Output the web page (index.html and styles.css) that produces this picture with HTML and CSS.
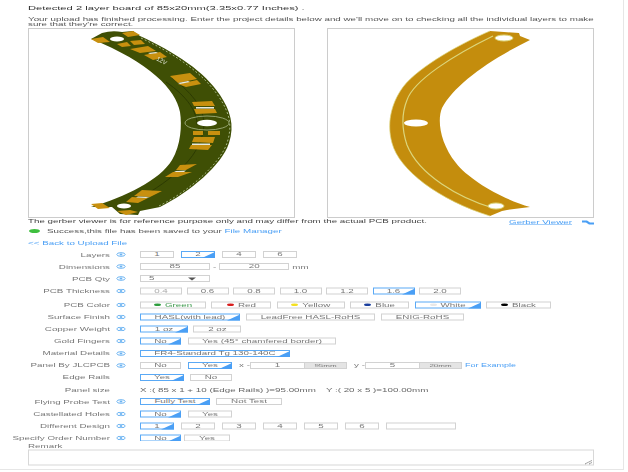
FILE: index.html
```html
<!DOCTYPE html>
<html lang="en">
<head>
  <meta charset="UTF-8" />
  <title>PCB upload</title>
  <link rel="stylesheet" href="styles.css">
</head>
<body>
  <svg class="defs" width="0" height="0">
    <symbol id="eye" viewBox="0 0 10 5" preserveAspectRatio="none">
      <ellipse cx="5" cy="2.5" rx="4.2" ry="1.8" fill="none" stroke="#6db4f2" stroke-width="1"/>
      <ellipse cx="5" cy="2.5" rx="1.4" ry="1" fill="#6db4f2"/>
    </symbol>
  </svg>

  <div class="frame">
  <div class="page">
    <div class="top">
      <p class="detected">Detected 2 layer board of 85x20mm(3.35x0.77 Inches) .</p>
      <p class="intro">Your upload has finished processing. Enter the project details below and we'll move on to checking all the individual layers to make sure that they're correct.</p>

      <div class="viewers">
        <div class="viewer">
          <svg viewBox="29 29 265 188" preserveAspectRatio="none">
            <path d="M91 39 L102 33 Q112 30 122 32 L133 31 L140 36 C175 52 205 72 220 95 C230 110 235 125 229 143 C222 165 190 192 160 207 L140 211 L138 215 L120 214 L112 207 L91 207 C125 197 160 180 172 160 C181 145 182 125 180 112 C176 90 150 62 91 39 Z" fill="#3f4f05"/>
            <path d="M141 38 C175 54 204 74 219 97 C229 112 233 125 227 143 C220 164 189 191 159 206" fill="none" stroke="#a9b98a" stroke-width="1" stroke-dasharray="2 2"/>
            <path d="M172 78 C195 95 204 110 204 125 C202 150 185 170 150 192 M166 82 C188 97 197 112 197 125" fill="none" stroke="#2c3a02" stroke-width="1"/>
            <g fill="#c8900f">
              <polygon points="91,39 103,37 110,42 98,43"/>
              <polygon points="122,33 133,31 140,35 128,37"/>
              <polygon points="117,44 127,42 131,46 122,47"/>
              <polygon points="130,41 141,40 145,44 134,45"/>
              <polygon points="130,49 148,46 156,51 140,53"/>
              <polygon points="144,55 160,52 167,57 153,60"/>
              <polygon points="170,76 190,73 197,79 178,83"/>
              <polygon points="178,84 197,80 201,84 186,87"/>
              <polygon points="192,102 212,101 215,106 194,106"/>
              <polygon points="194,109 215,109 217,113 196,114"/>
              <rect x="193" y="131" width="10" height="4"/>
              <rect x="208" y="131" width="12" height="4"/>
              <polygon points="194,137 215,137 213,143 192,142"/>
              <polygon points="191,145 212,145 208,150 189,149"/>
              <polygon points="180,165 197,164 186,170 176,170"/>
              <polygon points="173,172 192,172 178,177 165,177"/>
              <polygon points="142,190 162,191 150,197 134,196"/>
              <polygon points="132,197 148,198 138,203 126,202"/>
              <polygon points="91,204 102,203 110,208 98,209"/>
              <polygon points="117,211 130,210 138,212 126,215"/>
            </g>
            <g fill="#e8eadf">
              <polygon points="148,53 156,52 158,53 150,54"/>
              <polygon points="178,83 188,81 190,82 180,84"/>
              <rect x="196" y="107" width="18" height="1.6"/>
              <rect x="192" y="143.5" width="18" height="1.5"/>
              <polygon points="176,171 186,170.5 184,172 174,172"/>
              <polygon points="138,196.5 150,197 146,198 136,197.5"/>
            </g>
            <g fill="#fff">
              <ellipse cx="117" cy="39" rx="7" ry="2.6"/>
              <ellipse cx="207" cy="123" rx="10" ry="3.2"/>
              <ellipse cx="124" cy="206" rx="7" ry="2.6"/>
            </g>
            <ellipse cx="207" cy="123" rx="22" ry="7" fill="none" stroke="#a9b98a" stroke-width="0.8"/>
            <text class="silk" transform="translate(156 60) rotate(28)">12V</text>
          </svg>
        </div>
        <div class="viewer">
          <svg viewBox="329 29 265 188" preserveAspectRatio="none">
            <path d="M531 40 L521 36 L520 33 L505 32 L491 31 C465 42 420 66 404 87 C391 105 388 125 393 143 C400 170 440 200 491 216 L503 211 L508 210 L531 207 C505 200 470 180 457 163 C441 143 438 120 443 108 C455 85 490 60 531 40 Z" fill="#c48d0d"/>
            <path d="M491 31 C465 42 420 66 404 87 C391 105 388 125 393 143 C400 170 440 200 491 216" fill="none" stroke="#dcd67c" stroke-width="0.7"/>
            <path d="M494 36 C455 55 415 80 408 100 C402 115 403 130 408 145 C420 175 460 198 494 208" fill="none" stroke="#dcd67c" stroke-width="1.2"/>
            <ellipse cx="417" cy="123" rx="12" ry="3.6" fill="#fff"/>
            <ellipse cx="505" cy="38" rx="9" ry="3" fill="#fff" stroke="#dcd67c"/>
            <ellipse cx="497" cy="206" rx="8" ry="3" fill="#fff" stroke="#dcd67c"/>
          </svg>
        </div>
      </div>

      <div class="caption">
        <span>The gerber viewer is for reference purpose only and may differ from the actual PCB product.</span>
        <a class="viewer-link">Gerber Viewer</a>
        <svg class="viewer-icon" viewBox="0 0 12 5" preserveAspectRatio="none"><path d="M0 0.5 H5 L8 2.5 H12 V4.5 H7 L4 2.5 H0 Z" fill="#4a9ff5"/></svg>
      </div>

      <div class="saved">
        <span class="ok"></span>
        <span>Success,this file has been saved to your <a class="link">File Manager</a></span>
      </div>
      <a class="link back">&lt;&lt; Back to Upload File</a>
    </div>

    <form class="form">
      <div class="row">
        <span class="label">Layers</span><svg class="eye"><use href="#eye"/></svg>
        <div class="opts g7">
          <span class="btn w34">1</span><span class="btn on w34">2</span><span class="btn w34">4</span><span class="btn w34">6</span>
        </div>
      </div>
      <div class="row">
        <span class="label">Dimensions</span><svg class="eye"><use href="#eye"/></svg>
        <div class="opts g3">
          <span class="btn w70">85</span><span>-</span><span class="btn w70">20</span><span>mm</span>
        </div>
      </div>
      <div class="row">
        <span class="label">PCB Qty</span><svg class="eye"><use href="#eye"/></svg>
        <div class="opts">
          <span class="btn w70 select">5<i class="caret"></i></span>
        </div>
      </div>
      <div class="row">
        <span class="label">PCB Thickness</span><svg class="eye"><use href="#eye"/></svg>
        <div class="opts g45">
          <span class="btn w42 off">0.4</span><span class="btn w42">0.6</span><span class="btn w42">0.8</span><span class="btn w42">1.0</span><span class="btn w42">1.2</span><span class="btn on w42">1.6</span><span class="btn w42">2.0</span>
        </div>
      </div>
      <div class="row colors">
        <span class="label">PCB Color</span><svg class="eye"><use href="#eye"/></svg>
        <div class="opts g5">
          <span class="btn w66"><i class="dot green"></i><span class="t-green">Green</span></span>
          <span class="btn w60"><i class="dot red"></i>Red</span>
          <span class="btn w68"><i class="dot yellow"></i>Yellow</span>
          <span class="btn w59"><i class="dot blue"></i>Blue</span>
          <span class="btn on w66"><i class="dot white"></i>White</span>
          <span class="btn w65"><i class="dot black"></i>Black</span>
        </div>
      </div>
      <div class="row">
        <span class="label">Surface Finish</span><svg class="eye"><use href="#eye"/></svg>
        <div class="opts g6">
          <span class="btn on w100">HASL(with lead)</span><span class="btn w129">LeadFree HASL-RoHS</span><span class="btn w83">ENIG-RoHS</span>
        </div>
      </div>
      <div class="row">
        <span class="label">Copper Weight</span><svg class="eye"><use href="#eye"/></svg>
        <div class="opts g5">
          <span class="btn on w48">1 oz</span><span class="btn w48">2 oz</span>
        </div>
      </div>
      <div class="row">
        <span class="label">Gold Fingers</span><svg class="eye"><use href="#eye"/></svg>
        <div class="opts g7">
          <span class="btn on w41">No</span><span class="btn w148">Yes (45° chamfered border)</span>
        </div>
      </div>
      <div class="row">
        <span class="label">Material Details</span><svg class="eye"><use href="#eye"/></svg>
        <div class="opts">
          <span class="btn on w150">FR4-Standard Tg 130-140C</span>
        </div>
      </div>
      <div class="row">
        <span class="label">Panel By JLCPCB</span><svg class="eye"><use href="#eye"/></svg>
        <div class="opts g7">
          <span class="btn w41">No</span><span class="btn on w44">Yes</span>
          <div class="pair">
            <span class="axis">x -</span><span class="btn w55">1</span><span class="unit">95mm</span>
          </div>
          <div class="pair">
            <span class="axis">y -</span><span class="btn w55">5</span><span class="unit">20mm</span>
          </div>
          <a class="link example">For Example</a>
        </div>
      </div>
      <div class="row">
        <span class="label">Edge Rails</span><span class="no-eye"></span>
        <div class="opts g6">
          <span class="btn on w44">Yes</span><span class="btn w42">No</span>
        </div>
      </div>
      <div class="row">
        <span class="label">Panel size</span><span class="no-eye"></span>
        <div class="opts size">
          <span>X :( 85 x 1 + 10 (Edge Rails) )=95.00mm</span><span>Y :( 20 x 5 )=100.00mm</span>
        </div>
      </div>
      <div class="row">
        <span class="label">Flying Probe Test</span><svg class="eye"><use href="#eye"/></svg>
        <div class="opts g6">
          <span class="btn on w70">Fully Test</span><span class="btn w66">Not Test</span>
        </div>
      </div>
      <div class="row">
        <span class="label">Castellated Holes</span><svg class="eye"><use href="#eye"/></svg>
        <div class="opts g7">
          <span class="btn on w41">No</span><span class="btn w44">Yes</span>
        </div>
      </div>
      <div class="row">
        <span class="label">Different Design</span><svg class="eye"><use href="#eye"/></svg>
        <div class="opts g7">
          <span class="btn on w34">1</span><span class="btn w34">2</span><span class="btn w34">3</span><span class="btn w34">4</span><span class="btn w34">5</span><span class="btn w34">6</span><span class="btn w70"></span>
        </div>
      </div>
      <div class="row">
        <span class="label">Specify Order Number</span><svg class="eye"><use href="#eye"/></svg>
        <div class="opts g3">
          <span class="btn on w41">No</span><span class="btn w46">Yes</span>
        </div>
      </div>
      <div class="remark">
        <label>Remark</label>
        <textarea></textarea>
      </div>
    </form>
  </div>
  </div>
</body>
</html>
```

FILE: styles.css
```css
html, body {
  margin: 0;
  padding: 0;
  height: 100%;
  background: #fff;
  overflow: hidden;
}

body {
  font-family: "Liberation Sans", Arial, sans-serif;
  font-size: 9.8px;
  color: #555;
}

.defs {
  position: absolute;
}

.frame {
  height: 472px;
  overflow: hidden;
}

/* the whole capture is squashed vertically, so everything below is laid out at twice its height */
.page {
  width: 624px;
  height: 940px;
  margin-bottom: -470px;
  box-sizing: border-box;
  border-right: 1px solid #e6e6e6;
  border-bottom: 2px solid #e6e6e6;
  transform: scale(1, 0.5);
  transform-origin: 0 0;
  filter: blur(0.35px);
}

.top {
  padding: 10px 29px 0 28px;
}

p {
  margin: 0;
}

.detected {
  font-size: 11.2px;
  line-height: 12px;
  color: #333;
}

.intro {
  margin-top: 11px;
  line-height: 10px;
  color: #555;
}

.viewers {
  display: flex;
  justify-content: space-between;
  margin-top: 3px;
}

.viewer {
  width: 267px;
  height: 380px;
  box-sizing: border-box;
  border: solid #ccc;
  border-width: 2px 1px;
  background: #fff;
}

.viewer svg {
  display: block;
  width: 100%;
  height: 100%;
}

.silk {
  font-size: 6px;
  fill: #e8eadf;
}

.caption {
  position: relative;
  display: flex;
  align-items: flex-start;
  line-height: 12px;
  height: 18px;
  color: #444;
}

.viewer-link {
  margin-left: auto;
  margin-top: 3px;
  margin-right: 22px;
  color: #4a9ff5;
  text-decoration: underline;
}

.viewer-icon {
  position: absolute;
  right: 0;
  top: 4px;
  width: 12px;
  height: 10px;
}

.saved {
  display: flex;
  align-items: center;
  gap: 7px;
  margin-top: 2px;
  padding-left: 1px;
  height: 12px;
  color: #555;
}

.ok {
  width: 11px;
  height: 8px;
  border-radius: 50%;
  background: #3fbf3f;
}

.link {
  color: #4a9ff5;
}

.back {
  display: block;
  margin-top: 13px;
  height: 12px;
  line-height: 12px;
}

.form {
  margin-top: 4px;
}

.row {
  display: flex;
  align-items: center;
  height: 24.2px;
  color: #777;
}

.colors {
  margin-top: 4px;
}

.label {
  width: 110px;
  text-align: right;
  flex: none;
  white-space: nowrap;
}

.eye {
  width: 10px;
  height: 10px;
  margin-left: 6px;
  flex: none;
}

.no-eye {
  width: 16px;
  flex: none;
}

.opts {
  display: flex;
  align-items: center;
  margin-left: 14px;
}

.g3 { gap: 3px; }
.g45 { gap: 4.5px; }
.g5 { gap: 5.4px; }
.g6 { gap: 6px; }
.g7 { gap: 7px; }

.btn {
  position: relative;
  display: flex;
  align-items: center;
  justify-content: center;
  gap: 4px;
  height: 14px;
  box-sizing: border-box;
  border: solid #d2d2d2;
  border-width: 2px 1px;
  background: #fff;
  line-height: 10px;
  white-space: nowrap;
}

.btn.off {
  color: #aaa;
}

.btn.on {
  border-color: #5aa9f5;
}

.btn.on::after {
  content: "";
  position: absolute;
  right: -1px;
  bottom: -2px;
  border-style: solid;
  border-width: 0 0 12px 13px;
  border-color: transparent transparent #4a9ff5 transparent;
}

.w34 { width: 34px; }
.w41 { width: 41px; }
.w42 { width: 42px; }
.w44 { width: 44px; }
.w46 { width: 46px; }
.w48 { width: 48px; }
.w55 { width: 55px; }
.w59 { width: 59px; }
.w60 { width: 60px; }
.w65 { width: 65px; }
.w66 { width: 66px; }
.w68 { width: 68px; }
.w70 { width: 70px; }
.w83 { width: 83px; }
.w100 { width: 100px; }
.w129 { width: 129px; }
.w148 { width: 148px; }
.w150 { width: 150px; }

.select {
  justify-content: flex-start;
  padding-left: 8px;
}

.caret {
  position: absolute;
  right: 13px;
  top: 3px;
  border-style: solid;
  border-width: 6px 4px 0 4px;
  border-color: #555 transparent transparent transparent;
}

.dot {
  width: 7px;
  height: 5px;
  border-radius: 50%;
}

.green { background: #2e9e3e; }
.red { background: #d81e1e; }
.yellow { background: #f4e020; }
.blue { background: #1a3f9e; }
.white { background: #e8e8e8; }
.black { background: #000; }

.t-green {
  color: #3c9a4c;
}

.pair {
  display: flex;
  align-items: center;
}

.axis {
  width: 11px;
  text-align: center;
}

.unit {
  display: flex;
  align-items: center;
  justify-content: center;
  width: 42px;
  height: 14px;
  box-sizing: border-box;
  border: solid #d2d2d2;
  border-width: 2px 1px 2px 0;
  background: #e4e4e4;
  color: #777;
  font-size: 8px;
}

.example {
  margin-left: -4px;
  font-size: 9px;
}

.size {
  gap: 10px;
  color: #666;
}

.remark {
  padding: 0 29px 0 28px;
}

.remark label {
  display: block;
  height: 10px;
  line-height: 10px;
  color: #777;
}

.remark textarea {
  display: block;
  width: 100%;
  height: 32px;
  margin-top: 1px;
  box-sizing: border-box;
  border: solid #d8d8d8;
  border-width: 2px 1px;
  padding: 0;
}
```
